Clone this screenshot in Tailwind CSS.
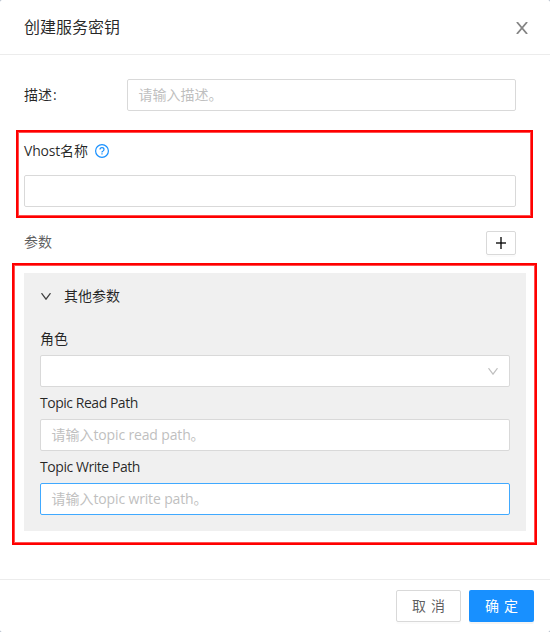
<!DOCTYPE html>
<html lang="zh-CN">
<head>
<meta charset="utf-8">
<title>创建服务密钥</title>
<script src="https://cdn.jsdelivr.net/npm/@tailwindcss/browser@4"></script>
</head>
<body class="bg-[#a3b0c0]">
<div class="relative flex h-[632px] w-[550px] flex-col overflow-hidden rounded-[2px] bg-white font-['Open_Sans','Noto_Sans_CJK_SC',sans-serif] text-[14px] leading-[22px] text-black/85">
  <header class="flex h-[55px] shrink-0 items-center justify-between border-b border-[#ececec] pr-[22px] pl-6">
    <h1 class="text-[16px] leading-6">创建服务密钥</h1>
    <svg class="mt-0.5 h-3 w-3" viewBox="0 0 12 12" fill="none" stroke="#858585" stroke-width="1.8"><path d="M.9 0 11.1 12M11.1 0 .9 12"/></svg>
  </header>

  <main class="flex flex-1 flex-col pt-6 pr-[34px] pl-6">
    <div class="flex h-8 items-center">
      <label class="w-[103px]">描述<span class="ml-px">:</span></label>
      <div class="flex h-8 flex-1 items-center rounded-[2px] border border-[#d9d9d9] pl-[10.500px] text-[#bfbfbf]">请输入描述。</div>
    </div>

    <div class="relative mt-[29px]">
      <div class="pointer-events-none absolute -top-[10px] -right-[17px] -left-2 h-[88px] border-2 border-[#ff0000] outline outline-1 -outline-offset-3 outline-[#ff5050]"></div>
      <div class="flex h-[22px] items-center">
        <span><span class="tracking-[-0.2px]">Vhost</span>名称</span>
        <svg class="ml-[7px] h-[14px] w-[14px]" viewBox="0 0 14 14" fill="none" stroke="#1890ff"><circle cx="7" cy="7" r="6.4" stroke-width="1.2"/><path d="M5 5.6C5 4.3 5.8 3.7 7 3.7s2 .7 2 1.800c0 1-.7 1.400-1.300 1.700-.5.2-.7.5-.7 1v.3" stroke-width="1.2"/><path d="M6.400 9.900h1.200" stroke-width="1.200"/></svg>
      </div>
      <div class="mt-[13px] h-8 rounded-[2px] border border-[#d9d9d9]"></div>
    </div>

    <div class="mt-6 flex h-6 items-center justify-between">
      <span class="-mt-0.5 text-black/65">参数</span>
      <button class="flex h-6 w-[30px] items-center justify-center rounded-[2px] border border-[#d9d9d9] shadow-[0_2px_0_rgba(0,0,0,0.016)]">
        <svg class="h-3 w-[10px]" viewBox="0 0 10 12" fill="none" stroke="#000" stroke-opacity=".65" stroke-width="2"><path d="M5 0v12"/><path d="M0 6h10"/></svg>
      </button>
    </div>

    <section class="relative -mr-[10px] mt-[18px] h-[258px] bg-[#f0f0f0] px-4 pt-3">
      <div class="pointer-events-none absolute -top-[10px] -right-[11px] -left-3 h-[282px] border-2 border-[#ff0000] outline outline-1 -outline-offset-3 outline-[#ff5050]"></div>
      <div class="flex h-[22px] items-center gap-[13px]">
        <svg class="ml-px h-[7px] w-[10px]" viewBox="0 0 10 7" fill="none" stroke="#404040" stroke-width="1.3"><path d="m.5.2 4.500 6 4.500-6"/></svg>
        <span>其他参数</span>
      </div>
      <div class="mt-[21px] flex h-[22px] items-center">角色</div>
      <div class="mt-[5px] flex h-8 items-center justify-end rounded-[2px] border border-[#d9d9d9] bg-white pr-[11px]">
        <svg class="h-[7px] w-[10px]" viewBox="0 0 10 7" fill="none" stroke="#bfbfbf" stroke-width="1.2"><path d="m.5.2 4.500 6 4.500-6"/></svg>
      </div>
      <div class="mt-[5px] h-[22px] tracking-[-0.47px]">Topic Read Path</div>
      <div class="mt-[5px] flex h-8 items-center rounded-[2px] border border-[#d9d9d9] bg-white pl-[10.500px] text-[#bfbfbf]"><span>请输入<span class="tracking-[-0.15px]">topic read path</span>。</span></div>
      <div class="mt-[5px] h-[22px] tracking-[-0.44px]">Topic Write Path</div>
      <div class="mt-[5px] flex h-8 items-center rounded-[2px] border border-[#40a9ff] bg-white pl-[10.500px] text-[#bfbfbf]"><span>请输入<span class="tracking-[-0.15px]">topic write path</span>。</span></div>
    </section>
  </main>

  <footer class="flex h-[53px] shrink-0 justify-end gap-2 border-t border-[#ececec] pt-[10px] pr-4">
    <button class="h-8 w-[65px] rounded-[2px] border border-[#d9d9d9] bg-white text-black/65 shadow-[0_2px_0_rgba(0,0,0,0.016)] [word-spacing:1.500px]">取 消</button>
    <button class="h-8 w-[65px] rounded-[2px] bg-[#1890ff] text-white shadow-[0_2px_0_rgba(0,0,0,0.043)] [word-spacing:1.500px]">确 定</button>
  </footer>
</div>
</body>
</html>
